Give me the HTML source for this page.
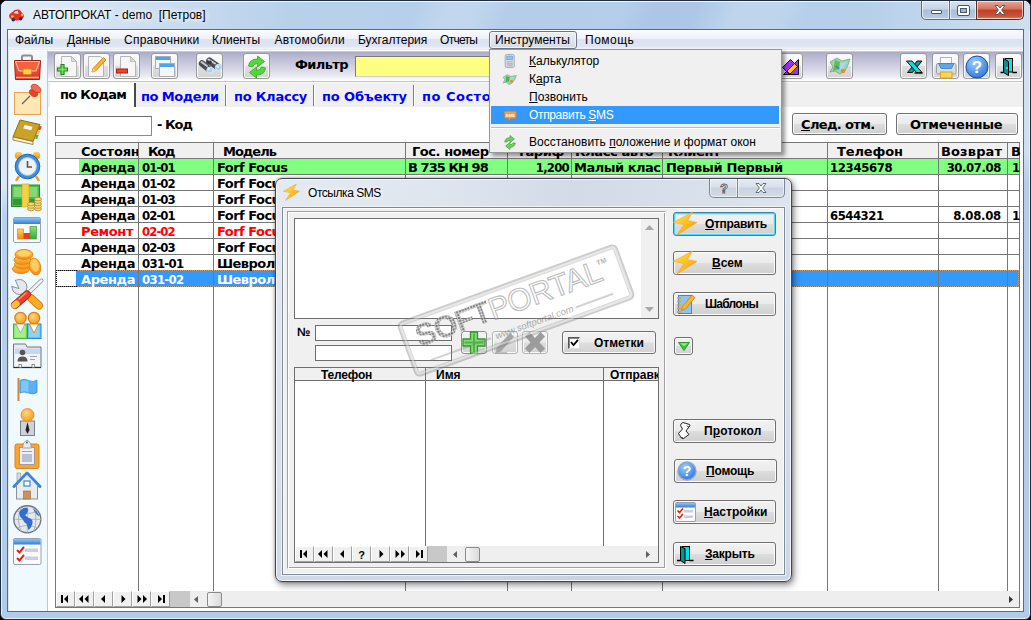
<!DOCTYPE html>
<html lang="ru">
<head>
<meta charset="utf-8">
<title>АВТОПРОКАТ - demo [Петров]</title>
<style>
*{box-sizing:border-box;margin:0;padding:0}
html,body{width:1031px;height:620px;overflow:hidden;background:#000}
body{position:relative;font-family:"Liberation Sans",sans-serif;font-size:12px;color:#000}
.abs{position:absolute}
svg{position:absolute;overflow:visible}
#win{position:absolute;left:0;top:0;width:1031px;height:620px;border-radius:7px 7px 6px 6px;overflow:hidden;
 background:#b1cceb;border:1px solid #1f2c3d;box-shadow:inset 0 0 0 1px #e4eefa}
#wtop{position:absolute;left:0;top:0;width:1029px;height:29px;background:linear-gradient(115deg,rgba(255,255,255,0) 40%,rgba(255,255,255,.16) 43%,rgba(255,255,255,.16) 46%,rgba(255,255,255,0) 49%,rgba(110,150,200,0) 60%,rgba(110,150,200,.13) 63%,rgba(110,150,200,.13) 67%,rgba(255,255,255,.12) 71%,rgba(255,255,255,.12) 75%,rgba(255,255,255,0) 78%),linear-gradient(90deg,#e1ebf7 0%,#d6e4f3 9%,#c6d9ee 19%,#b8d1eb 28%,#b4ceea 50%,#b6d0ea 84%,#c3d8ee 92%,#cfdff1 100%);box-shadow:inset 0 1px 0 #f2f7fc}
#wl{position:absolute;left:0;top:29px;width:7px;height:560px;background:linear-gradient(#e0eaf6 0%,#dbe7f5 28%,#b8d1ec 33%,#b1cceb 100%);box-shadow:inset 1px 0 0 #e9f1fa}
#wr{position:absolute;left:1023px;top:29px;width:6px;height:560px;background:linear-gradient(#d3e2f2 0%,#cddff1 22%,#b4ceeb 27%,#b1cceb 100%);box-shadow:inset -1px 0 0 #e9f1fa}
#title{left:33px;top:8px;height:14px;line-height:14px;font-size:12px;white-space:pre;text-shadow:0 0 6px #fff,0 0 6px #fff}
#client{left:7px;top:29px;width:1017px;height:583px;background:#fff;border:1px solid #5f6a78}
/* caption buttons */
.cap{position:absolute;top:1px;height:19px;border:1px solid #5d6b7c;border-top:none;background:linear-gradient(#d9e4f1 0%,#c3d3e6 45%,#a9bfd8 50%,#b8cce2 100%);box-shadow:inset 0 0 0 1px rgba(255,255,255,.6)}
/* menu bar */
#menubar{left:8px;top:30px;width:1015px;height:19px;background:linear-gradient(#fbfcfe 0%,#eef1f9 45%,#dde2f1 50%,#dfe4f3 85%,#f4f6fb 100%)}
.mi{position:absolute;top:3px;height:14px;line-height:14px;white-space:pre;font-size:12px}
#menuline{left:8px;top:49px;width:1015px;height:1px;background:#e9ebf5}
#mbtn{left:489px;top:31px;width:88px;height:18px;border:1px solid #6c7686;border-radius:3px;background:linear-gradient(#eceef3,#d6dae2);box-shadow:inset 0 0 0 1px rgba(255,255,255,.6)}
/* sidebar */
#side{left:8px;top:50px;width:40px;height:561px;background:#eff9fe;border-right:1px solid #bccad3;border-left:1px solid #dde5eb;border-top:1px solid #fff}
/* toolbar */
#tb{left:48px;top:50px;width:975px;height:32px;background:linear-gradient(#fff 0,#fff 1px,#c6c6dc 1px,#c6c6dc 2px,#acacc8 2px,#c2c2d8 32%,#d8d8e8 62%,#f0f0f7 86%,#ffffff 96%)}
.tbtn{position:absolute;top:53px;width:27px;height:26px;border:1px solid #9a9a9a;border-radius:3px;background:linear-gradient(#fdfdfd,#efefef 50%,#dedede 51%,#d4d4d4);box-shadow:inset 0 0 0 1px #f8f8f8}
.tbtn svg{left:0;top:0}
.b{font-family:"DejaVu Sans","Liberation Sans",sans-serif;font-weight:bold;font-size:13px;letter-spacing:-.4px;white-space:pre}
/* win7 push button */
.pb{position:absolute;border:1px solid #707070;border-radius:3px;background:linear-gradient(#f2f2f2 0%,#ebebeb 48%,#dddddd 52%,#cfcfcf 100%);box-shadow:inset 0 0 0 1px #fcfcfc}
.u{text-decoration:underline}
.dc{font-family:"DejaVu Sans Condensed","DejaVu Sans",sans-serif}
.nb{width:19px;height:16px;background:#f0f0f0;border:1px solid #fff;border-right-color:#a0a0a0;border-bottom-color:#a0a0a0}
#dlg{left:275px;top:178px;width:517px;height:404px;border-radius:7px;border:1px solid #3f4855;
 background:linear-gradient(rgba(255,255,255,0) 0,rgba(255,255,255,0) 30px,rgba(190,205,222,.55) 100%),linear-gradient(90deg,#e4eaf2 0%,#dfe6ee 30%,#d2dbe6 58%,#d8e0ea 80%,#dde4ed 100%);
 box-shadow:inset 0 0 0 1px #f3f6fa,2px 3px 7px rgba(0,0,0,.45),0 0 3px rgba(0,0,0,.35)}
#dcl{left:282px;top:207px;width:503px;height:368px;background:#f0f0f0;border:1px solid #7f8995;box-shadow:0 0 0 1px #eef2f7,inset 0 0 0 1px #fbfbfb}
#dtitle{left:308px;top:186px;line-height:14px;font-size:12px;letter-spacing:-.45px;white-space:pre;text-shadow:0 0 5px #fff,0 0 5px #fff}
.dcap{position:absolute;top:179px;height:19px;border:1px solid #7d8793;border-top:none;background:linear-gradient(#e6ebf2 0%,#d9e0e9 45%,#c9d2de 50%,#d5dce6 100%);box-shadow:inset 0 0 0 1px rgba(255,255,255,.55)}
.db{font-family:"Liberation Sans",sans-serif;font-weight:bold;font-size:12px;white-space:pre;position:absolute;line-height:14px}
.sb{position:absolute;border:1px solid #8e8e8e;border-radius:3px;background:linear-gradient(#f4f4f4 0%,#ececec 48%,#dedede 52%,#d2d2d2 100%);box-shadow:inset 0 0 0 1px #fafafa}
#pop{left:489px;top:49px;width:293px;height:104px;background:#f0f0f0;border:1px solid #979797;box-shadow:3px 3px 4px rgba(0,0,0,.4)}
.pi{position:absolute;left:529px;font-size:12px;line-height:14px;white-space:pre}
</style>
</head>
<body>
<div id="win"><div id="wtop"></div><div id="wl"></div><div id="wr"></div></div>
<svg style="left:6.500px;top:6px" width="20" height="18" viewBox="0 0 20 18">
 <ellipse cx="9.5" cy="10" rx="7.5" ry="4.6" fill="#e8321e"/>
 <path d="M5 7 Q7 3 11.5 3.6 Q14.5 4.2 15 8 Z" fill="#e8321e"/>
 <path d="M6.6 7.2 Q8 4.6 11 4.8 L11.4 8 Z" fill="#b9e2f7"/>
 <circle cx="5.3" cy="10.4" r="1.2" fill="#f7d23a"/><circle cx="15.2" cy="9" r="1.1" fill="#f7d23a"/>
 <circle cx="6.3" cy="13.8" r="1.8" fill="#1b2f8a"/><circle cx="13.7" cy="12.8" r="1.7" fill="#1b2f8a"/>
</svg>
<div id="title" class="abs">АВТОПРОКАТ - demo  [Петров]</div>
<div class="cap" style="left:921px;width:29px;border-radius:0 0 0 5px"><i class="abs" style="left:9px;top:9px;width:11px;height:4px;background:#fff;border:1px solid #4a5666;border-radius:1px"></i></div>
<div class="cap" style="left:949px;width:28px;border-left:1px solid #5d6b7c"><i class="abs" style="left:8px;top:5px;width:11px;height:9px;border:2px solid #fff;outline:1px solid #4a5666;border-radius:1px;box-shadow:inset 0 0 0 1px #4a5666;background:#9fb6d2"></i></div>
<div class="cap" style="left:976px;width:48px;border-radius:0 0 5px 0;background:linear-gradient(#e9a99a 0%,#d5705c 45%,#c03f26 50%,#c9553a 85%,#d98a6e 100%);border-color:#5a2a26">
 <svg style="left:17px;top:4px" width="12" height="10" viewBox="0 0 12 10"><path d="M1 0.5h3l2 2.6 2-2.6h3L7.6 5 11 9.5H8L6 6.9 4 9.5H1L4.4 5z" fill="#fff" stroke="#5b5050" stroke-width=".9"/></svg>
</div>
<div id="client" class="abs"></div>
<div id="menubar" class="abs">
<span class="mi" style="left:7px">Файлы</span>
<span class="mi" style="left:59px">Данные</span>
<span class="mi" style="left:116px;letter-spacing:.25px">Справочники</span>
<span class="mi" style="left:204px">Клиенты</span>
<span class="mi" style="left:266.500px;letter-spacing:.2px">Автомобили</span>
<span class="mi" style="left:350px">Бухгалтерия</span>
<span class="mi" style="left:432px;letter-spacing:-.7px">Отчеты</span>
<span class="mi" style="left:577px;letter-spacing:.5px">Помощь</span>
</div>
<div id="menuline" class="abs"></div>
<div id="mbtn" class="abs"></div>
<span class="mi" style="left:495px;top:33px">Инструменты</span>
<div id="side" class="abs"></div>
<div id="tb" class="abs"></div>
<svg style="left:0;top:0" width="60" height="620" viewBox="0 0 60 620">
<defs>
 <linearGradient id="gRed" x1="0" y1="0" x2="0" y2="1"><stop offset="0" stop-color="#f4775a"/><stop offset="1" stop-color="#d8321c"/></linearGradient>
 <linearGradient id="gOr" x1="0" y1="0" x2="0" y2="1"><stop offset="0" stop-color="#ffd35a"/><stop offset="1" stop-color="#f08a12"/></linearGradient>
 <linearGradient id="gBl" x1="0" y1="0" x2="0" y2="1"><stop offset="0" stop-color="#8fc4f4"/><stop offset="1" stop-color="#2f7fd6"/></linearGradient>
 <linearGradient id="gGr" x1="0" y1="0" x2="0" y2="1"><stop offset="0" stop-color="#8fe07a"/><stop offset="1" stop-color="#3aa538"/></linearGradient>
 <linearGradient id="gGy" x1="0" y1="0" x2="0" y2="1"><stop offset="0" stop-color="#f4f4f6"/><stop offset="1" stop-color="#c9cbd2"/></linearGradient>
 <radialGradient id="gHead" cx=".4" cy=".35" r=".7"><stop offset="0" stop-color="#ffd67a"/><stop offset="1" stop-color="#f39a1c"/></radialGradient>
</defs>
<!-- 1 briefcase -->
<rect x="22" y="55.500" width="10" height="7" rx="1.500" fill="none" stroke="#8e8e8e" stroke-width="2"/>
<path d="M14.500 60.500 h26 l-1 19 h-24 z" fill="url(#gRed)" stroke="#a81e0e" stroke-width="1"/>
<path d="M16 77.500 h23" stroke="#f9b9a0" stroke-width="1.500"/>
<path d="M15.500 61.500 h24 l-3.500 9.500 h-17 z" fill="#f4623c" stroke="#fbd0c0" stroke-width=".9"/>
<rect x="23" y="69" width="8.500" height="5.500" rx="1.500" fill="#ffd04a" stroke="#d98a12" stroke-width=".8"/>
<!-- 2 pinned note -->
<rect x="14.5" y="92.5" width="26" height="22" fill="#fde7b4" stroke="#f0a050" stroke-width="1"/>
<path d="M22 104 l8-8" stroke="#666" stroke-width="1.3"/>
<ellipse cx="33.5" cy="93" rx="5" ry="3.6" fill="#e2422c" transform="rotate(35 33.5 93)"/>
<ellipse cx="36" cy="88.5" rx="5.5" ry="3.4" fill="#f06a4e" stroke="#c8321c" stroke-width=".7" transform="rotate(35 36 88.5)"/>
<!-- 3 book -->
<path d="M20 120 l20 4.5 -7 17 -20-4.5z" fill="#c9a227" stroke="#8f6e12" stroke-width="1"/>
<path d="M13 137 l20 4.5 0 3 -20-4.5z" fill="#f4f1e6" stroke="#8f6e12" stroke-width=".8"/>
<path d="M24.5 125 l8 1.8 -1.3 3.4 -8-1.8z" fill="#fbf7e6"/>
<path d="M39.5 126 l2.3 .5 -1.5 3.8 -2.3-.5z" fill="#e8442e"/><path d="M38 130.3 l2.3 .5 -1.5 3.8 -2.3-.5z" fill="#f5c431"/><path d="M36.400 134.600 l2.300 .5 -1.5 3.800 -2.300-.5z" fill="#4db83a"/>
<!-- 4 alarm clock -->
<circle cx="18.500" cy="155.500" r="3.800" fill="url(#gOr)"/><circle cx="36.500" cy="155.500" r="3.800" fill="url(#gOr)"/>
<path d="M18.500 177 l-2 3 M36.500 177 l2 3" stroke="#f09a22" stroke-width="2.400" stroke-linecap="round"/>
<circle cx="27.500" cy="166.500" r="12.300" fill="#3e8ee0" stroke="#1f63b3" stroke-width="1"/>
<circle cx="27.500" cy="166.500" r="9" fill="#eef1f6" stroke="#9fc3ec" stroke-width="1"/>
<path d="M27.500 161 v6 h4.500" fill="none" stroke="#555" stroke-width="1.600"/>
<!-- 5 money -->
<rect x="11.500" y="185" width="28" height="21.500" fill="#4cbc46" stroke="#2a8a2c" stroke-width="1"/>
<rect x="13.500" y="187" width="24" height="10" fill="#8ede7c" opacity=".85"/>
<rect x="13" y="199" width="25" height="6" fill="#2f9a36"/>
<rect x="22" y="184" width="7" height="23" fill="#f3d24a" stroke="#c9a21c" stroke-width=".6"/>
<g fill="#f7d978" stroke="#b8892a" stroke-width=".8"><ellipse cx="31" cy="209" rx="3.500" ry="1.800"/><ellipse cx="31" cy="206.500" rx="3.500" ry="1.800"/><ellipse cx="31" cy="204" rx="3.500" ry="1.800"/>
<ellipse cx="38" cy="209" rx="3.500" ry="1.800"/><ellipse cx="38" cy="206.500" rx="3.500" ry="1.800"/><ellipse cx="38" cy="204" rx="3.500" ry="1.800"/><ellipse cx="38" cy="201.500" rx="3.500" ry="1.800"/><ellipse cx="38" cy="199" rx="3.500" ry="1.800"/></g>
<!-- 6 chart window -->
<rect x="13.500" y="217.500" width="27" height="25" rx="1.500" fill="#fbfbfd" stroke="#9aa0ad" stroke-width="1"/>
<rect x="14" y="218" width="26" height="6" fill="url(#gBl)"/>
<rect x="17.500" y="229" width="6" height="10" fill="url(#gOr)" stroke="#e08a1a" stroke-width=".7"/><rect x="23.500" y="233" width="6.500" height="6" fill="#e8401c"/><rect x="30" y="226.500" width="6.500" height="12.500" fill="url(#gGr)" stroke="#3aa538" stroke-width=".7"/>
<!-- 7 coins -->
<g fill="url(#gOr)" stroke="#e8860e" stroke-width="1"><ellipse cx="21" cy="269" rx="8.500" ry="4.500"/><ellipse cx="23" cy="264.500" rx="8.500" ry="4.500"/><ellipse cx="22.500" cy="260" rx="8.500" ry="4.500"/><ellipse cx="24" cy="254.500" rx="9" ry="5"/>
<ellipse cx="35" cy="266.500" rx="5.500" ry="8.500" transform="rotate(-14 35 266.500)"/></g>
<ellipse cx="24" cy="253.800" rx="6.500" ry="3" fill="#ffd878" opacity=".8"/><ellipse cx="35" cy="266" rx="3.500" ry="6" fill="#ffd878" opacity=".7" transform="rotate(-14 35 266)"/>
<!-- 8 tools -->
<path d="M22 290 L31 298" stroke="#8a8f99" stroke-width="6.500" stroke-linecap="round"/>
<path d="M22 290 L31 298" stroke="#dfe2e7" stroke-width="4.800" stroke-linecap="round"/>
<circle cx="19.500" cy="287" r="7.500" fill="#e4e7eb" stroke="#8a8f99" stroke-width="1"/>
<path d="M19 288.500 L8 285.500 L14.500 275.500 Z" fill="#eff9fe"/>
<path d="M19 288.500 L11.200 286.300 M19 288.500 L15.200 279.800" stroke="#8a8f99" stroke-width="1"/>
<path d="M31.500 298.500 L39 305.500" stroke="#d97a0c" stroke-width="8" stroke-linecap="round"/>
<path d="M31.500 298.500 L39 305.500" stroke="#f9ae24" stroke-width="6.300" stroke-linecap="round"/>
<path d="M41.500 280.500 L28 293.500" stroke="#8a8f99" stroke-width="4" stroke-linecap="round"/>
<path d="M41.500 280.500 L28 293.500" stroke="#f1f3f6" stroke-width="2.500" stroke-linecap="round"/>
<path d="M27 294.500 L15 305" stroke="#b3260f" stroke-width="8" stroke-linecap="round"/>
<path d="M27 294.500 L15 305" stroke="#ea3e22" stroke-width="6.300" stroke-linecap="round"/>
<path d="M16.500 303.700 L14.500 305.400" stroke="#f7c03a" stroke-width="6.300" stroke-linecap="round"/>
<path d="M26 293 L19 299" stroke="#f79a80" stroke-width="1.500" stroke-linecap="round"/>
<!-- 9 people -->
<rect x="13.500" y="324" width="13.500" height="14.500" fill="#8be86c" stroke="#44b436" stroke-width="1"/>
<rect x="27.500" y="324" width="13.500" height="14.500" fill="#6cc2f8" stroke="#2f86d8" stroke-width="1"/>
<rect x="15" y="326" width="10.500" height="11" fill="#b4f49c" opacity=".6"/><rect x="29" y="326" width="10.500" height="11" fill="#a4dcfc" opacity=".6"/>
<path d="M16 324 h9 l-4.500 9z" fill="#f4f4f4" stroke="#9a9a9a" stroke-width=".7"/><path d="M29.500 324 h9 l-4.500 9z" fill="#fff" stroke="#e08a1a" stroke-width=".9"/>
<circle cx="20.500" cy="318" r="5.700" fill="url(#gHead)" stroke="#d9780c" stroke-width="1.100"/><circle cx="34" cy="318" r="5.700" fill="url(#gHead)" stroke="#d9780c" stroke-width="1.100"/>
<!-- 10 id card -->
<path d="M13.500 344 h12 l1.500 3 h14 v20.500 h-27.500z" fill="#e6e9ee" stroke="#6f7582" stroke-width="1"/>
<rect x="15" y="348.500" width="25" height="5.500" fill="#c7d8ee"/>
<rect x="15" y="354" width="25" height="12" fill="#f4f5f7"/>
<circle cx="22.500" cy="352.500" r="2.800" fill="#555"/><path d="M17.500 361.500 q0-5 5-5 q5 0 5 5z" fill="#555"/>
<path d="M30 356.500 h7 M30 359.500 h5" stroke="#9aa0ad" stroke-width="1"/>
<path d="M13.500 367.500 h27.500" stroke="#2a2d33" stroke-width="1.200"/>
<rect x="19" y="364.500" width="2.500" height="3" fill="#fff" stroke="#555" stroke-width=".6"/><rect x="32" y="364.500" width="2.500" height="3" fill="#fff" stroke="#555" stroke-width=".6"/>
<!-- 11 flag -->
<rect x="17.500" y="378" width="2" height="23" fill="#c98a3a"/>
<path d="M20 380.500 q4-2.500 8.500 0 t8.500-.5 v12.500 q-4 2.500 -8.500 .5 t-8.500 0z" fill="#5ab0f6" stroke="#3a90e0" stroke-width=".8"/>
<path d="M21 381.500 q3.500-2 7.500 0 v10.500 q-4-1.500 -7.500 0z" fill="#8fd0fc" opacity=".7"/>
<!-- 12 key person -->
<rect x="20.500" y="421" width="14" height="14.500" fill="#cfd2d8" stroke="#7c818b" stroke-width="1"/>
<path d="M27.500 422 l2 8 -2 4 -2-4z" fill="#222"/>
<circle cx="27.500" cy="415" r="6.500" fill="url(#gHead)" stroke="#e08a1a" stroke-width=".8"/>
<!-- 13 clipboard -->
<rect x="15" y="444" width="24" height="24.500" rx="2" fill="#f8a432" stroke="#e08418" stroke-width="1"/>
<rect x="19.500" y="447.500" width="15" height="17" fill="#eef0f5" stroke="#8a8f99" stroke-width=".8"/>
<rect x="22" y="454" width="10" height="8" fill="#b9c0d2"/><path d="M22 451.500 h10" stroke="#9aa3b8" stroke-width="1"/>
<path d="M22.500 448 l1-5 3.500-3 3.500 3 1 5z" fill="#e8eaee" stroke="#8a8f99" stroke-width=".8"/><circle cx="27" cy="442.500" r=".9" fill="#555"/>
<!-- 14 house -->
<rect x="17" y="473" width="3.500" height="8" fill="#d9dce2" stroke="#8a8f99" stroke-width=".6"/>
<rect x="16.500" y="485" width="21" height="14" fill="#e9ebef" stroke="#8a8f99" stroke-width="1"/>
<path d="M14 486.500 l13-13.500 13 13.500" fill="none" stroke="#3a82dc" stroke-width="3" stroke-linejoin="round" stroke-linecap="round"/>
<path d="M16.500 486 l10.500-11 10.500 11z" fill="#e9ebef"/>
<rect x="24" y="481" width="6" height="5" fill="#fff" stroke="#3a82dc" stroke-width="1.200"/>
<rect x="23.500" y="491" width="7" height="8" fill="#c9925a" stroke="#9a6a32" stroke-width=".6"/>
<!-- 15 globe -->
<circle cx="27.300" cy="519.300" r="13.500" fill="#e6e8ec" stroke="#6f7582" stroke-width="1.400"/>
<path d="M27.300 506 v27 M14 519.300 h27 M17 511 q10 5 21 0 M17 528 q10 -5 21 0 M21 507.500 q-5 12 0 24 M33.500 507.500 q5 12 0 24" fill="none" stroke="#a9adb6" stroke-width=".9"/>
<path d="M19 513 q2-5 7-5.500 q3 1 2 3.500 q-1 3 -3 4 q2 2 4 3 q4 1 3.500 5 q-1 5 -4 7 q-1-4 -2-6 q-3-2 -4-5 q-3-2 -3.500-6z" fill="#2f6fd0"/>
<path d="M33 508.500 q5 3 6.500 8 q-3-1 -4-4 q-2-2 -2.500-4z" fill="#2f6fd0"/>
<!-- 16 checklist -->
<rect x="13.500" y="538.500" width="27.500" height="26" rx="1.500" fill="#fbfbfd" stroke="#9aa0ad" stroke-width="1"/>
<rect x="14" y="539" width="26.500" height="5.500" fill="url(#gBl)"/>
<rect x="25" y="548.500" width="13" height="3.500" fill="#c9cee0"/><rect x="25" y="556.500" width="13" height="3.500" fill="#c9cee0"/>
<path d="M17 550 l2.500 2.500 4.500-5.500 M17 558 l2.500 2.500 4.500-5.500" fill="none" stroke="#d8261a" stroke-width="2"/>
</svg>
<!-- toolbar buttons -->
<div class="tbtn" style="left:54px"><svg width="26" height="26" viewBox="0 0 26 26">
 <path d="M6.500 2.500 h10 l5 5 v15 h-15z" fill="#f6f6f6" stroke="#b5b5b5" stroke-width="1"/><path d="M16.500 2.500 v5 h5z" fill="#dcdcdc" stroke="#b5b5b5" stroke-width=".8"/>
 <path d="M6 10.500 h3 v3.500 h3.500 v3 h-3.500 v3.500 h-3 v-3.500 h-3.500 v-3 h3.500z" fill="#7be06a" stroke="#1f8a1a" stroke-width="1.200"/></svg></div>
<div class="tbtn" style="left:83px"><svg width="26" height="26" viewBox="0 0 26 26">
 <path d="M4.500 2.500 h12 l3 3 v17 h-15z" fill="#f6f6f6" stroke="#b5b5b5" stroke-width="1"/>
 <path d="M9 14.500 l10.500-11 2.500 2.500 -10.500 11 -3.500 1z" fill="#f7b62c" stroke="#c97f10" stroke-width=".9"/><path d="M9 14.500 l-.8 3.300 3.300-.8z" fill="#f3d9a8"/></svg></div>
<div class="tbtn" style="left:113px"><svg width="26" height="26" viewBox="0 0 26 26">
 <path d="M6.500 2.500 h10 l5 5 v15 h-15z" fill="#f6f6f6" stroke="#b5b5b5" stroke-width="1"/><path d="M16.500 2.500 v5 h5z" fill="#dcdcdc" stroke="#b5b5b5" stroke-width=".8"/>
 <rect x="2.500" y="15" width="11" height="4" fill="#f0452a" stroke="#a8200e" stroke-width="1"/></svg></div>
<div class="tbtn" style="left:151px"><svg width="26" height="26" viewBox="0 0 26 26">
 <rect x="3.500" y="2.500" width="15" height="12" fill="#f4f5f8" stroke="#a9adb8" stroke-width="1"/><rect x="4" y="3" width="14" height="3" fill="#4aa6ea"/>
 <rect x="7.500" y="9.500" width="15" height="13" fill="#f4f5f8" stroke="#a9adb8" stroke-width="1"/><rect x="8" y="10" width="14" height="3" fill="#4aa6ea"/></svg></div>
<div class="tbtn" style="left:196px"><svg width="26" height="26" viewBox="0 0 26 26">
 <path d="M5 9.500 L12.500 15.500" stroke="#4a4d55" stroke-width="6.500" stroke-linecap="round"/>
 <path d="M12.500 7 L21 13" stroke="#4a4d55" stroke-width="7" stroke-linecap="round"/>
 <path d="M4.500 8 L10 12" stroke="#c9ccd3" stroke-width="2" stroke-linecap="round"/>
 <path d="M11.500 5.500 L18 9.500" stroke="#c9ccd3" stroke-width="2" stroke-linecap="round"/>
 <path d="M9 7.500 L14 6.500 L15 9 L11 10.500z" fill="#33363d"/>
 <circle cx="12.800" cy="16" r="3" fill="#9fd0f8" stroke="#e8f4ff" stroke-width=".8"/><circle cx="21.500" cy="13.500" r="3.200" fill="#9fd0f8" stroke="#e8f4ff" stroke-width=".8"/>
 <circle cx="12" cy="15.200" r="1.100" fill="#e9f6ff"/><circle cx="20.700" cy="12.600" r="1.200" fill="#e9f6ff"/></svg></div>
<div class="tbtn" style="left:243px"><svg width="26" height="26" viewBox="0 0 26 26">
 <path d="M4.500 12 q1-7 9-7 l0-3 7 5.500 -7 5.500 0-3.500 q-4 0 -5 3.500z" fill="#52d83a" stroke="#35b024" stroke-width=".9"/>
 <path d="M21.500 14 q-1 7 -9 7 l0 3 -7-5.500 7-5.500 0 3.500 q4 0 5-3.500z" fill="#52d83a" stroke="#35b024" stroke-width=".9"/></svg></div>
<div class="b abs" style="left:295px;top:57px;line-height:16px;letter-spacing:-.62px">Фильтр</div>
<div class="abs" style="left:355px;top:56px;width:440px;height:21px;background:#ffff80;border:1px solid #7a7a7a;border-right-color:#d0d0d0;border-bottom-color:#d0d0d0"></div>
<div class="tbtn" style="left:776px"><svg width="26" height="26" viewBox="0 0 26 26">
 <path d="M21.500 5.500 V20.500 H6.500z" fill="#9b30ff" stroke="#111" stroke-width="1"/>
 <path d="M13.500 5.500 L20.500 12.500 L12.500 20.500 L5.500 13.500z" fill="#9b30ff" stroke="#111" stroke-width="1"/>
 <path d="M17.500 9.500 L20.500 12.500 L13 20 L10 17z" fill="#ffc800" stroke="#111" stroke-width=".8"/></svg></div>
<div class="tbtn" style="left:826px"><svg width="26" height="26" viewBox="0 0 26 26">
 <path d="M3 8 l7-4 5 3 8-2 -2 6 -3 6 -5 3 -5-3 -5 1 3-5z" fill="#9ad7a0" stroke="#7f9aa8" stroke-width=".8"/>
 <path d="M8 6 l5 2 -1 7 -6 2z" fill="#5fc050"/><path d="M13 9 l6-1 -2 6 -4 2z" fill="#a9d6f2"/>
 <circle cx="16" cy="17" r="2.300" fill="#f08a2a"/><path d="M9 12 l3 3" stroke="#3a7ad0" stroke-width="1.500"/></svg></div>
<div class="tbtn" style="left:900px"><svg width="26" height="26" viewBox="0 0 26 26">
 <path d="M16 7 h5 l-9.500 11.500 h-5z" fill="#0b9a9a" stroke="#000" stroke-width=".9"/>
 <path d="M5.500 7 h5.500 l10 11.500 h-5.500z" fill="#19dada" stroke="#000" stroke-width=".9"/>
 <path d="M13.500 19 h8" stroke="#000" stroke-width="1.400"/></svg></div>
<div class="tbtn" style="left:932px"><svg width="26" height="26" viewBox="0 0 26 26">
 <rect x="7.500" y="3.500" width="11" height="7" fill="#fafafa" stroke="#b5b5b5" stroke-width="1"/>
 <rect x="3.500" y="9.500" width="19.500" height="10.500" rx="1.500" fill="#d9dce1" stroke="#9a9fa9" stroke-width="1"/>
 <path d="M5.500 9.500 h15.500 l-2.500 5 h-10.500z" fill="#5aa8e8" stroke="#3a82cc" stroke-width=".8"/>
 <rect x="7.500" y="18" width="11.500" height="6" fill="#fbd65a" stroke="#d9a21c" stroke-width="1"/></svg></div>
<div class="tbtn" style="left:963px"><svg width="26" height="26" viewBox="0 0 26 26">
 <defs><radialGradient id="gq" cx=".4" cy=".3" r=".8"><stop offset="0" stop-color="#9fd0ff"/><stop offset="1" stop-color="#1f6fd8"/></radialGradient></defs>
 <circle cx="13" cy="13" r="11" fill="url(#gq)" stroke="#1a4fa8" stroke-width="1"/>
 <text x="13" y="19" text-anchor="middle" font-family="Liberation Sans,sans-serif" font-weight="bold" font-size="17" fill="#fff">?</text></svg></div>
<div class="tbtn" style="left:995px"><svg width="26" height="26" viewBox="0 0 26 26">
 <rect x="9.500" y="4.500" width="7" height="13.500" fill="#00e8e8" stroke="#000" stroke-width="1"/>
 <path d="M7.500 4.500 l5 3 v14 l-5-3z" fill="#0a8f8f" stroke="#000" stroke-width="1"/>
 <circle cx="11" cy="14" r=".8" fill="#fff"/>
 <path d="M4.500 18.500 h3 M16.500 18.500 h4.500" stroke="#000" stroke-width="1.300"/></svg></div>
<!-- tab strip -->
<div class="abs" style="left:48px;top:81px;width:975px;height:26px;background:#f0f0f0;border-top:1px solid #c4c4c4"></div><i class="abs" style="left:48px;top:82px;width:975px;height:1px;background:#fafafa"></i>
<div class="abs" style="left:50px;top:83px;width:86px;height:24px;background:#fff;border-right:2px solid #4a4a4a;border-left:1px solid #e0e0e0"></div>
<div class="abs" style="left:50px;top:83px;width:83px;height:25px;background:#fff"></div>
<div class="b abs" style="left:60px;top:87px;line-height:16px;letter-spacing:-.7px">по Кодам</div>
<div class="b abs" style="left:141px;top:89px;line-height:16px;color:#00f;letter-spacing:-.53px">по Модели</div>
<div class="b abs" style="left:234px;top:89px;line-height:16px;color:#00f;letter-spacing:-.24px">по Классу</div>
<div class="b abs" style="left:322px;top:89px;line-height:16px;color:#00f;letter-spacing:-.11px">по Объекту</div>
<div class="b abs" style="left:422px;top:89px;line-height:16px;color:#00f;letter-spacing:.5px">по Состоянию</div>
<i class="abs" style="left:225px;top:85px;width:2px;height:21px;background:#808080;border-right:1px solid #fff"></i>
<i class="abs" style="left:313px;top:85px;width:2px;height:21px;background:#808080;border-right:1px solid #fff"></i>
<i class="abs" style="left:413px;top:85px;width:2px;height:21px;background:#808080;border-right:1px solid #fff"></i>
<!-- filter row -->
<div class="abs" style="left:55px;top:116px;width:97px;height:20px;background:#fff;border:1px solid #6e6e6e;border-right-color:#8a8a8a;border-bottom-color:#8a8a8a"></div>
<div class="b abs" style="left:157px;top:117px;line-height:16px;letter-spacing:-1px">- Код</div>
<div class="pb" style="left:792px;top:113px;width:95px;height:22px"></div>
<div class="b abs" style="left:801px;top:117px;line-height:16px;letter-spacing:-.63px"><span class="u">С</span>лед. отм.</div>
<div class="pb" style="left:896px;top:113px;width:122px;height:22px"></div>
<div class="b abs" style="left:910px;top:117px;line-height:16px;letter-spacing:-.19px">Отмеченные</div>
<!-- main grid -->
<div class="abs" style="left:55px;top:142px;width:965px;height:466px;background:#fff;border:1px solid #777"></div>
<div class="abs" style="left:56px;top:143px;width:963px;height:15px;background:#f0f0f0"></div>
<div class="abs" style="left:79px;top:159px;width:940px;height:15px;background:#80ff80"></div>
<div class="abs" style="left:76px;top:271px;width:943px;height:15px;background:#3399ff"></div>
<i class="abs" style="left:56px;top:158px;width:963px;height:1px;background:#777"></i>
<i class="abs" style="left:56px;top:174px;width:963px;height:1px;background:#777"></i>
<i class="abs" style="left:56px;top:190px;width:963px;height:1px;background:#777"></i>
<i class="abs" style="left:56px;top:206px;width:963px;height:1px;background:#777"></i>
<i class="abs" style="left:56px;top:222px;width:963px;height:1px;background:#777"></i>
<i class="abs" style="left:56px;top:238px;width:963px;height:1px;background:#777"></i>
<i class="abs" style="left:56px;top:254px;width:963px;height:1px;background:#777"></i>
<i class="abs" style="left:56px;top:270px;width:963px;height:1px;background:#777"></i>
<i class="abs" style="left:56px;top:286px;width:963px;height:1px;background:#777"></i>
<div class="abs" style="left:56px;top:270px;width:963px;height:17px;border:1px dotted #c8a070;border-left-color:#000"></div>
<div class="abs" style="left:56px;top:270px;width:21px;height:17px;border:1px dotted #000;border-right:none"></div>
<i class="abs" style="left:138px;top:143px;width:1px;height:448px;background:#777"></i>
<i class="abs" style="left:213px;top:143px;width:1px;height:448px;background:#777"></i>
<i class="abs" style="left:405px;top:143px;width:1px;height:448px;background:#777"></i>
<i class="abs" style="left:507px;top:143px;width:1px;height:448px;background:#777"></i>
<i class="abs" style="left:571px;top:143px;width:1px;height:448px;background:#777"></i>
<i class="abs" style="left:662px;top:143px;width:1px;height:448px;background:#777"></i>
<i class="abs" style="left:827px;top:143px;width:1px;height:448px;background:#777"></i>
<i class="abs" style="left:938px;top:143px;width:1px;height:448px;background:#777"></i>
<i class="abs" style="left:1007px;top:143px;width:1px;height:448px;background:#777"></i>
<div class="b abs" style="left:81px;top:144px;width:57px;overflow:hidden;line-height:16px;letter-spacing:-.2px">Состояние</div>
<div class="b abs" style="left:148px;top:144px;line-height:16px;letter-spacing:-1.3px">Код</div>
<div class="b abs" style="left:223px;top:144px;line-height:16px;letter-spacing:-1px">Модель</div>
<div class="b abs" style="left:412px;top:144px;line-height:16px;letter-spacing:-.45px">Гос. номер</div>
<div class="b abs" style="left:517px;top:144px;line-height:16px;">Тариф</div>
<div class="b abs" style="left:575px;top:144px;line-height:16px;">Класс авто</div>
<div class="b abs" style="left:668px;top:144px;line-height:16px;">Клиент</div>
<div class="b abs" style="left:837px;top:144px;line-height:16px;letter-spacing:-.14px">Телефон</div>
<div class="b abs" style="left:941px;top:144px;line-height:16px;letter-spacing:.13px">Возврат</div>
<div class="b abs" style="left:1011px;top:144px;line-height:16px;">В</div>
<div class="b abs" style="left:81px;top:160px;line-height:16px;color:#000">Аренда</div>
<div class="b dc abs" style="left:142px;top:160px;line-height:16px;color:#000;letter-spacing:-.95px">01-01</div>
<div class="b abs" style="left:217px;top:160px;line-height:16px;color:#000;letter-spacing:-.54px">Forf Focus</div>
<div class="b abs" style="left:81px;top:176px;line-height:16px;color:#000">Аренда</div>
<div class="b dc abs" style="left:142px;top:176px;line-height:16px;color:#000;letter-spacing:-.95px">01-02</div>
<div class="b abs" style="left:217px;top:176px;line-height:16px;color:#000;letter-spacing:-.54px">Forf Focus</div>
<div class="b abs" style="left:81px;top:192px;line-height:16px;color:#000">Аренда</div>
<div class="b dc abs" style="left:142px;top:192px;line-height:16px;color:#000;letter-spacing:-.95px">01-03</div>
<div class="b abs" style="left:217px;top:192px;line-height:16px;color:#000;letter-spacing:-.54px">Forf Focus</div>
<div class="b abs" style="left:81px;top:208px;line-height:16px;color:#000">Аренда</div>
<div class="b dc abs" style="left:142px;top:208px;line-height:16px;color:#000;letter-spacing:-.95px">02-01</div>
<div class="b abs" style="left:217px;top:208px;line-height:16px;color:#000;letter-spacing:-.54px">Forf Focus</div>
<div class="b abs" style="left:81px;top:224px;line-height:16px;color:#f00">Ремонт</div>
<div class="b dc abs" style="left:142px;top:224px;line-height:16px;color:#f00;letter-spacing:-.95px">02-02</div>
<div class="b abs" style="left:217px;top:224px;line-height:16px;color:#f00;letter-spacing:-.54px">Forf Focus</div>
<div class="b abs" style="left:81px;top:240px;line-height:16px;color:#000">Аренда</div>
<div class="b dc abs" style="left:142px;top:240px;line-height:16px;color:#000;letter-spacing:-.95px">02-03</div>
<div class="b abs" style="left:217px;top:240px;line-height:16px;color:#000;letter-spacing:-.54px">Forf Focus</div>
<div class="b abs" style="left:81px;top:256px;line-height:16px;color:#000">Аренда</div>
<div class="b dc abs" style="left:142px;top:256px;line-height:16px;color:#000;letter-spacing:-.7px">031-01</div>
<div class="b abs" style="left:217px;top:256px;line-height:16px;color:#000;letter-spacing:-.54px">Шевроле Нива</div>
<div class="b abs" style="left:81px;top:272px;line-height:16px;color:#fff">Аренда</div>
<div class="b dc abs" style="left:142px;top:272px;line-height:16px;color:#fff;letter-spacing:-.7px">031-02</div>
<div class="b abs" style="left:217px;top:272px;line-height:16px;color:#fff;letter-spacing:-.54px">Шевроле Нива</div>
<div class="b abs" style="left:408px;top:160px;line-height:16px;letter-spacing:-.95px">В 735 КН 98</div>
<div class="b dc abs" style="left:508px;top:160px;width:61px;text-align:right;line-height:16px;letter-spacing:-.75px">1,200</div>
<div class="b abs" style="left:574px;top:160px;line-height:16px;letter-spacing:-.49px">Малый клас</div>
<div class="b abs" style="left:666px;top:160px;line-height:16px;letter-spacing:-.31px">Первый Первый</div>
<div class="b dc abs" style="left:830px;top:160px;line-height:16px;letter-spacing:-.34px">12345678</div>
<div class="b dc abs" style="left:939px;top:160px;width:62px;text-align:right;line-height:16px;letter-spacing:-.42px">30.07.08</div>
<div class="b dc abs" style="left:1012px;top:160px;line-height:16px;">1</div>
<div class="b dc abs" style="left:830px;top:208px;line-height:16px;letter-spacing:-.49px">6544321</div>
<div class="b dc abs" style="left:939px;top:208px;width:62px;text-align:right;line-height:16px;letter-spacing:-.26px">8.08.08</div>
<div class="b dc abs" style="left:1012px;top:208px;line-height:16px;">1</div>
<div class="abs" style="left:56px;top:591px;width:963px;height:16px;background:#eeeeee"></div>
<div class="abs nb" style="left:56px;top:591px"></div>
<div class="abs nb" style="left:75px;top:591px"></div>
<div class="abs nb" style="left:94px;top:591px"></div>
<div class="abs nb" style="left:113px;top:591px"></div>
<div class="abs nb" style="left:132px;top:591px"></div>
<div class="abs nb" style="left:151px;top:591px"></div>
<div class="abs" style="left:170px;top:591px;width:20px;height:16px;background:#c8c8c8"></div>
<svg style="left:56px;top:591px" width="19" height="16" viewBox="0 0 19 16"><rect x="5" y="4" width="2" height="8" fill="#000"/><path d="M8 8 l4-4 v8z" fill="#000"/></svg>
<svg style="left:75px;top:591px" width="19" height="16" viewBox="0 0 19 16"><path d="M4 8 l4-4 v8z M9.500 8 l4-4 v8z" fill="#000"/></svg>
<svg style="left:94px;top:591px" width="19" height="16" viewBox="0 0 19 16"><path d="M7 8 l4-4 v8z" fill="#000"/></svg>
<svg style="left:113px;top:591px" width="19" height="16" viewBox="0 0 19 16"><path d="M12.500 8 l-4-4 v8z" fill="#000"/></svg>
<svg style="left:132px;top:591px" width="19" height="16" viewBox="0 0 19 16"><path d="M9.500 8 l-4-4 v8z M15 8 l-4-4 v8z" fill="#000"/></svg>
<svg style="left:151px;top:591px" width="19" height="16" viewBox="0 0 19 16"><path d="M11 8 l-4-4 v8z" fill="#000"/><rect x="12" y="4" width="2" height="8" fill="#000"/></svg>
<svg style="left:194px;top:596px" width="4" height="7" viewBox="0 0 4 7"><path d="M4 0 L0 3.500 L4 7z" fill="#606060"/></svg>
<div class="abs" style="left:207px;top:592px;width:15px;height:15px;border:1px solid #8a8a8a;border-radius:2px;background:linear-gradient(90deg,#f4f4f4,#dcdcdc)"></div>
<svg style="left:1009px;top:596px" width="4" height="7" viewBox="0 0 4 7"><path d="M0 0 L4 3.500 L0 7z" fill="#333"/></svg>
<!-- ===== SMS dialog ===== -->
<div id="dlg" class="abs"></div>
<div id="dcl" class="abs"></div>
<svg style="left:283px;top:184px" width="17" height="18" viewBox="0 0 17 18"><defs><linearGradient id="gLt" x1="0" y1="0" x2="1" y2="1"><stop offset="0" stop-color="#ffe94a"/><stop offset=".6" stop-color="#ffb81c"/><stop offset="1" stop-color="#f08a12"/></linearGradient></defs>
 <path d="M13.500 0 L.2 7.300 L7.600 8.800 L2.400 16.500 L16.500 7.300 L10 6 Z" fill="url(#gLt)" stroke="#f3a52a" stroke-width=".5"/></svg>
<div id="dtitle" class="abs">Отсылка SMS</div>
<div class="dcap" style="left:709px;width:29px;border-radius:0 0 0 5px"><svg style="left:9px;top:3px" width="10" height="13" viewBox="0 0 10 13"><text x="5" y="11" text-anchor="middle" font-family="Liberation Sans,sans-serif" font-weight="bold" font-size="13" fill="#fff" stroke="#55606e" stroke-width=".9">?</text></svg></div>
<div class="dcap" style="left:737px;width:48px;border-radius:0 0 5px 0"><svg style="left:17px;top:4px" width="12" height="10" viewBox="0 0 12 10"><path d="M1 .5h3l2 2.600 2-2.600h3L7.600 5 11 9.500H8L6 6.900 4 9.500H1L4.400 5z" fill="#fff" stroke="#55606e" stroke-width=".9"/></svg></div>
<!-- inner bevel panel -->
<div class="abs" style="left:287px;top:211px;width:379px;height:358px;border:1px solid #a0a0a0;border-right-color:#fff;border-bottom-color:#fff;box-shadow:inset 1px 1px 0 #fff,inset -1px -1px 0 #a0a0a0"></div>
<!-- textarea -->
<div class="abs" style="left:294px;top:218px;width:365px;height:101px;background:#fff;border:1px solid #6e6e6e"></div>
<div class="abs" style="left:641px;top:219px;width:17px;height:99px;background:#f0f0f0"></div>
<svg style="left:645px;top:225px" width="9" height="5" viewBox="0 0 9 5"><path d="M0 5 L4.500 0 L9 5z" fill="#a8a8a8"/></svg>
<svg style="left:645px;top:307px" width="9" height="5" viewBox="0 0 9 5"><path d="M0 0 L4.500 5 L9 0z" fill="#a8a8a8"/></svg>
<!-- number fields -->
<div class="db" style="left:297px;top:325px">№</div>
<div class="abs" style="left:315px;top:325px;width:137px;height:16px;background:#fff;border:1px solid #6e6e6e"></div>
<div class="abs" style="left:315px;top:345px;width:137px;height:16px;background:#fff;border:1px solid #6e6e6e"></div>
<!-- small buttons -->
<div class="sb" style="left:461px;top:331px;width:26px;height:23px"><svg style="left:0;top:-1px" width="24" height="23" viewBox="0 0 24 23"><path d="M8.500 1 h7 v7 h7.500 v7 h-7.500 v7.500 h-7 v-7.500 h-7.500 v-7 h7.500z" fill="#8ad878" stroke="#2f9a2a" stroke-width="1.300"/><path d="M11 2.500 h2 v18.500 h-2z M2.500 10.500 h19 v2 h-19z" fill="#4fb444"/></svg></div>
<div class="sb" style="left:492px;top:331px;width:26px;height:23px;border-color:#b4b4b4"><svg style="left:0;top:-1px" width="24" height="23" viewBox="0 0 24 23"><path d="M3.500 17 L17 2 l4 3.500 L8 20.500 l-5 1.500z" fill="#a6a6a6"/><path d="M2 22 h12" stroke="#a6a6a6" stroke-width="1.400"/></svg></div>
<div class="sb" style="left:522px;top:331px;width:26px;height:23px;border-color:#b4b4b4"><svg style="left:0;top:-1px" width="24" height="23" viewBox="0 0 24 23"><path d="M2 5.500 L6.500 1 L12 7 L17.500 1 L22 5.500 L16.500 11.500 L22 17.500 L17.500 22 L12 16 L6.500 22 L2 17.500 L7.500 11.500z" fill="#9c9c9c"/></svg></div>
<!-- Отметки -->
<div class="sb" style="left:562px;top:331px;width:94px;height:23px;border-color:#707070"></div>
<div class="abs" style="left:568px;top:337px;width:12px;height:12px;background:#fff;border:1px solid #555;border-right-color:#ddd;border-bottom-color:#ddd;box-shadow:inset 1px 1px 0 #888"></div>
<svg style="left:570px;top:339px" width="9" height="8" viewBox="0 0 9 8"><path d="M1 3 l2.500 3 L8 .8" fill="none" stroke="#000" stroke-width="1.800"/></svg>
<div class="db" style="left:594px;top:336px">Отметки</div>
<!-- dialog grid -->
<div class="abs" style="left:294px;top:367px;width:365px;height:196px;background:#fff;border:1px solid #6e6e6e"></div>
<div class="abs" style="left:295px;top:368px;width:363px;height:12px;background:#f0f0f0;border-bottom:1px solid #6e6e6e;height:13px"></div>
<i class="abs" style="left:425px;top:368px;width:1px;height:178px;background:#6e6e6e"></i>
<i class="abs" style="left:603px;top:368px;width:1px;height:178px;background:#6e6e6e"></i>
<div class="db" style="left:321px;top:368px;letter-spacing:-.2px">Телефон</div>
<div class="db" style="left:436px;top:368px">Имя</div>
<div class="db" style="left:610px;top:368px;width:48px;overflow:hidden">Отправка</div>
<!-- dialog nav -->
<div class="abs" style="left:295px;top:546px;width:363px;height:16px;background:#efefef"></div>
<div class="abs nb" style="left:295px;top:546px"></div>
<div class="abs nb" style="left:314px;top:546px"></div>
<div class="abs nb" style="left:333px;top:546px"></div>
<div class="abs nb" style="left:352px;top:546px"></div>
<div class="abs nb" style="left:371px;top:546px"></div>
<div class="abs nb" style="left:390px;top:546px"></div>
<div class="abs nb" style="left:409px;top:546px"></div>
<div class="abs" style="left:428px;top:546px;width:19px;height:16px;background:#c8c8c8"></div>
<svg style="left:295px;top:546px" width="19" height="16" viewBox="0 0 19 16"><rect x="5" y="4" width="2" height="8" fill="#000"/><path d="M8 8 l4-4 v8z" fill="#000"/></svg>
<svg style="left:314px;top:546px" width="19" height="16" viewBox="0 0 19 16"><path d="M4 8 l4-4 v8z M9.500 8 l4-4 v8z" fill="#000"/></svg>
<svg style="left:333px;top:546px" width="19" height="16" viewBox="0 0 19 16"><path d="M7 8 l4-4 v8z" fill="#000"/></svg>
<svg style="left:352px;top:546px" width="19" height="16" viewBox="0 0 19 16"><text x="9.500" y="12.500" text-anchor="middle" font-family="Liberation Sans,sans-serif" font-weight="bold" font-size="11" fill="#000">?</text></svg>
<svg style="left:371px;top:546px" width="19" height="16" viewBox="0 0 19 16"><path d="M12.500 8 l-4-4 v8z" fill="#000"/></svg>
<svg style="left:390px;top:546px" width="19" height="16" viewBox="0 0 19 16"><path d="M9.500 8 l-4-4 v8z M15 8 l-4-4 v8z" fill="#000"/></svg>
<svg style="left:409px;top:546px" width="19" height="16" viewBox="0 0 19 16"><path d="M11 8 l-4-4 v8z" fill="#000"/><rect x="12" y="4" width="2" height="8" fill="#000"/></svg>
<svg style="left:453px;top:551px" width="4" height="7" viewBox="0 0 4 7"><path d="M4 0 L0 3.500 L4 7z" fill="#606060"/></svg>
<div class="abs" style="left:465px;top:547px;width:15px;height:15px;border:1px solid #8a8a8a;border-radius:2px;background:linear-gradient(90deg,#f4f4f4,#dcdcdc)"></div>
<svg style="left:646px;top:551px" width="4" height="7" viewBox="0 0 4 7"><path d="M0 0 L4 3.500 L0 7z" fill="#606060"/></svg>
<!-- right column buttons -->
<div class="pb" style="left:673px;top:212px;width:103px;height:24px;border-color:#3c7fb1;box-shadow:inset 0 0 0 1px #48d8fb,inset 0 0 0 2px #b9ecfb"></div>
<div class="pb" style="left:673px;top:251px;width:103px;height:24px"></div>
<div class="pb" style="left:673px;top:292px;width:103px;height:24px"></div>
<div class="pb" style="left:674px;top:337px;width:19px;height:18px"></div>
<div class="pb" style="left:673px;top:419px;width:103px;height:24px"></div>
<div class="pb" style="left:674px;top:459px;width:103px;height:24px"></div>
<div class="pb" style="left:673px;top:500px;width:103px;height:24px"></div>
<div class="pb" style="left:673px;top:542px;width:103px;height:24px"></div>
<div class="db" style="left:705px;top:217px;letter-spacing:-.3px"><span class="u">О</span>тправить</div>
<div class="db" style="left:712px;top:256px"><span class="u">В</span>сем</div>
<div class="db" style="left:705px;top:297px;letter-spacing:-.75px">Шаблоны</div>
<div class="db" style="left:704px;top:424px;letter-spacing:.1px">П<span class="u">р</span>отокол</div>
<div class="db" style="left:706px;top:464px;letter-spacing:-.2px"><span class="u">П</span>омощь</div>
<div class="db" style="left:704px;top:505px"><span class="u">Н</span>астройки</div>
<div class="db" style="left:705px;top:547px;letter-spacing:-.2px"><span class="u">З</span>акрыть</div>
<!-- button icons -->
<svg style="left:673px;top:212px" width="24" height="24" viewBox="0 0 24 24"><path d="M19.600 0 L.2 10.400 L11 12.600 L3.500 23.300 L24 10.400 L14.500 8.500 Z" fill="url(#gLt)" stroke="#f3a52a" stroke-width=".6"/></svg>
<svg style="left:673px;top:251px" width="24" height="24" viewBox="0 0 24 24"><path d="M19.600 0 L.2 10.400 L11 12.600 L3.500 23.300 L24 10.400 L14.500 8.500 Z" fill="url(#gLt)" stroke="#f3a52a" stroke-width=".6"/></svg>
<svg style="left:675px;top:293px" width="22" height="22" viewBox="0 0 22 22"><rect x="3.500" y="2.500" width="13" height="18" fill="#8fc4f0" stroke="#3a8ad8" stroke-width="1"/><path d="M2 5 h4 M2 8.500 h4 M2 12 h4 M2 15.500 h4 M2 19 h4" stroke="#f09a22" stroke-width="1.600"/><path d="M7.500 13.500 L17 2 l3 2.500 L10.500 16 l-4 1.500z" fill="#f7b62c" stroke="#c97f10" stroke-width=".8"/></svg>
<svg style="left:678px;top:342px" width="12" height="9" viewBox="0 0 12 9"><path d="M.5 .5 h11 L6 8.500z" fill="#3fc43a" stroke="#2a9a28" stroke-width="1"/><path d="M2 1.300 h8 L6 4z" fill="#9be88f"/></svg>
<svg style="left:677px;top:421px" width="15" height="19" viewBox="0 0 15 19"><path d="M6 1.500 L12.500 3.500 Q13.500 5 12 6 L9 10 L12 13.500 L6.500 17.500 Q4.500 18 4 16.500 L1.500 12.500 L5.500 8 L3.500 4.500 Q4 2 6 1.500z" fill="#fafafa" stroke="#222" stroke-width="1"/><path d="M4 16.500 Q6 16 6.500 17.500 M12 6 Q10.500 6 10 4.500" fill="none" stroke="#222" stroke-width=".8"/></svg>
<svg style="left:677px;top:461px" width="20" height="20" viewBox="0 0 20 20"><circle cx="10" cy="10" r="9" fill="url(#gq)" stroke="#8fa6c8" stroke-width="1.400"/><text x="10" y="15" text-anchor="middle" font-family="Liberation Sans,sans-serif" font-weight="bold" font-size="14" fill="#fff">?</text></svg>
<svg style="left:675px;top:502px" width="21" height="20" viewBox="0 0 21 20"><rect x=".5" y=".5" width="20" height="19" rx="1.500" fill="#fbfbfd" stroke="#9aa0ad"/><rect x="1" y="1" width="19" height="4.500" fill="url(#gBl)"/><rect x="9" y="8" width="9" height="2.500" fill="#c9cee0"/><rect x="9" y="13.500" width="9" height="2.500" fill="#c9cee0"/><path d="M2.500 8.500 l2 2 3.500-4 M2.500 14 l2 2 3.500-4" fill="none" stroke="#d8261a" stroke-width="1.700"/></svg>
<svg style="left:676px;top:545px" width="18" height="19" viewBox="0 0 18 19"><rect x="6.500" y="1.500" width="7" height="14" fill="#00e0e0" stroke="#000" stroke-width="1"/><path d="M4.500 1.500 l4.500 2 v15 l-4.500-3z" fill="#0a8f8f" stroke="#000" stroke-width="1"/><path d="M1 15.500 h3.500 M13.500 15.500 h4" stroke="#000" stroke-width="1.300"/></svg>
<!-- watermark -->
<div class="abs" style="left:399px;top:281px;width:234px;height:59px;transform:rotate(-20deg);border:2px solid rgba(130,130,130,.4);border-radius:6px;box-shadow:inset 0 0 0 2px rgba(255,255,255,.4),inset 0 0 0 3px rgba(130,130,130,.3)">
 <div class="abs" style="left:12px;top:3px;font-family:'Liberation Sans',sans-serif;font-size:31px;line-height:31px;letter-spacing:-.5px;white-space:pre;color:rgba(255,255,255,.3);-webkit-text-stroke:1.100px rgba(120,120,120,.5)"><span style="font-weight:bold;letter-spacing:-1.200px;color:transparent;-webkit-text-stroke:0;background-image:linear-gradient(rgba(255,255,255,.55) 1px,transparent 1px),linear-gradient(90deg,rgba(255,255,255,.55) 1px,transparent 1px);background-size:3px 3px;background-color:rgba(105,105,105,.8);-webkit-background-clip:text;background-clip:text">SOFT</span>PORTAL</div>
 <div class="abs" style="left:207px;top:7px;font-family:'Liberation Sans',sans-serif;font-weight:bold;font-size:7px;line-height:8px;color:rgba(120,120,120,.55)">TM</div>
 <div class="abs" style="left:87px;top:39px;font-family:'Liberation Sans',sans-serif;font-size:9.500px;font-style:italic;line-height:12px;color:rgba(110,110,110,.6);white-space:pre">www.softportal.com</div>
 <i class="abs" style="left:18px;top:44px;width:64px;height:2px;background:rgba(130,130,130,.35)"></i>
 <i class="abs" style="left:172px;top:44px;width:40px;height:2px;background:rgba(130,130,130,.35)"></i>
</div>
<!-- ===== popup menu ===== -->
<div id="pop" class="abs"></div>
<div class="abs" style="left:491px;top:106px;width:288px;height:18px;background:#3399ff"></div>
<div class="abs" style="left:491px;top:127px;width:289px;height:1px;background:#bdbdbd"></div><div class="abs" style="left:491px;top:128px;width:289px;height:1px;background:#fff"></div>
<div class="pi" style="top:54px"><span class="u">К</span>алькулятор</div>
<div class="pi" style="top:72px">К<span class="u">а</span>рта</div>
<div class="pi" style="top:90px"><span class="u">П</span>озвонить</div>
<div class="pi" style="top:108px;color:#fff;letter-spacing:-.35px">Отправить <span class="u">S</span>MS</div>
<div class="pi" style="top:135px">Восстановить <span class="u">п</span>оложение и формат окон</div>
<!-- menu icons -->
<svg style="left:504px;top:54px" width="11.500" height="14" viewBox="0 0 14 17"><rect x="1.500" y=".5" width="11" height="16" rx="2" fill="#d9dce2" stroke="#9aa0ad"/><rect x="3.500" y="2.500" width="7" height="4.500" fill="#8fc4f4" stroke="#5a8ac8" stroke-width=".6"/><path d="M3.500 9.500 h7 M3.500 12 h7 M3.500 14.300 h7" stroke="#a9adb8" stroke-width="1.300"/></svg>
<svg style="left:502px;top:72.500px" width="15.500" height="12.500" viewBox="0 0 18 15"><path d="M1 5 l5-3 4 2 7-1 -2 5 -3 4 -4 2 -3-3 -4 1 2-4z" fill="#9ad7a0" stroke="#7f9aa8" stroke-width=".7"/><path d="M5 3.500 l4 1.500 -1 5 -4 1z" fill="#4fb444"/><path d="M10 5 l4-.5 -2 4 -3 1z" fill="#a9d6f2"/><circle cx="11" cy="10" r="1.800" fill="#f08a2a"/></svg>
<svg style="left:504px;top:110px" width="12.500" height="11" viewBox="0 0 16 14"><path d="M2 1.500 h12 q1.500 0 1.500 1.500 v6 q0 1.500 -1.500 1.500 h-5 l-3 3 v-3 h-4 q-1.500 0 -1.500-1.500 v-6 q0-1.500 1.500-1.500z" fill="#f5a030" stroke="#e07f12" stroke-width=".8"/><text x="8" y="8.500" text-anchor="middle" font-family="Liberation Sans,sans-serif" font-weight="bold" font-size="5.500" fill="#fff">SMS</text></svg>
<svg style="left:503px;top:134.500px" width="14" height="15" viewBox="0 0 16 17"><path d="M2 8 q.5-5 6-5 l0-2.500 5 4 -5 4 0-2.500 q-3 0 -3.500 2z" fill="#6fd45c" stroke="#2f9a2a" stroke-width=".7"/><path d="M14 9 q-.5 5 -6 5 l0 2.500 -5-4 5-4 0 2.500 q3 0 3.500-2z" fill="#6fd45c" stroke="#2f9a2a" stroke-width=".7"/></svg>
</body>
</html>
